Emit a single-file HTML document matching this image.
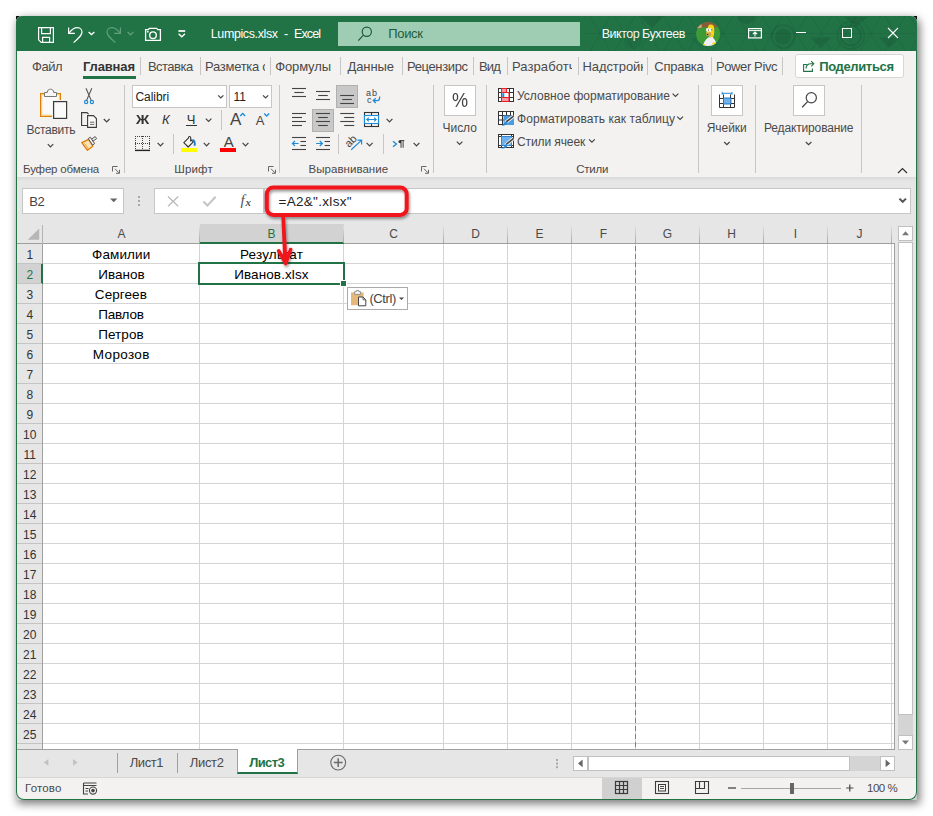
<!DOCTYPE html>
<html lang="ru"><head><meta charset="utf-8"><title>Lumpics.xlsx - Excel</title>
<style>
html,body{margin:0;padding:0;background:#fff}
body{position:relative;width:933px;height:816px;overflow:hidden;font-family:"Liberation Sans",sans-serif}
div,svg.i,span.t{position:absolute;box-sizing:border-box}
span.t{white-space:pre;line-height:1}
svg.i{overflow:visible}
.wb{background:#fff;border:1px solid #c6c6c6}
.sep{width:1px;background:#c8c6c4}

</style></head>
<body>
<div style="left:16px;top:16px;width:6px;height:6px;background:#0c1210"></div>
<div style="left:911px;top:16px;width:6px;height:6px;background:#0c1210"></div>
<div style="left:16px;top:16px;width:901px;height:784px;background:#cdcdcd;border-radius:6px 6px 1px 1px;box-shadow:2px 3px 9px 1px rgba(0,0,0,.5)"></div>
<div style="left:16px;top:16px;width:901px;height:784px;background:#e6e6e6;border-radius:6px 6px 8px 8px"></div>
<div style="left:16px;top:16px;width:901px;height:35px;background:#217346;border-radius:6px 6px 0 0"></div>
<span class="t" style="left:210.75px;top:28px;font-size:12.5px;color:#fff;letter-spacing:-0.389px;">Lumpics.xlsx</span>
<span class="t" style="left:283.90px;top:28px;font-size:12.5px;color:#fff;">-</span>
<span class="t" style="left:294.00px;top:28px;font-size:12.5px;color:#fff;letter-spacing:-0.891px;">Excel</span>
<div style="left:338px;top:22px;width:242px;height:24px;background:#9fcdb3"></div>
<span class="t" style="left:388.23px;top:27px;font-size:13px;color:#1e5c3a;letter-spacing:-0.326px;">Поиск</span>
<span class="t" style="left:601.75px;top:28px;font-size:12.5px;color:#fff;letter-spacing:-0.513px;">Виктор Бухтеев</span>
<div style="left:17px;top:51px;width:899px;height:126px;background:#f3f2f1"></div>
<span class="t" style="left:31.98px;top:60px;font-size:13px;color:#4a4a4a;letter-spacing:-0.455px;">Файл</span>
<span class="t" style="left:147.98px;top:60px;font-size:13px;color:#4a4a4a;letter-spacing:-0.525px;">Вставка</span>
<span class="t" style="left:204.98px;top:60px;font-size:13px;color:#4a4a4a;letter-spacing:-0.265px;width:60.3px;overflow:hidden;">Разметка с</span>
<span class="t" style="left:275.23px;top:60px;font-size:13px;color:#4a4a4a;letter-spacing:-0.133px;">Формулы</span>
<span class="t" style="left:347.48px;top:60px;font-size:13px;color:#4a4a4a;letter-spacing:-0.095px;">Данные</span>
<span class="t" style="left:406.98px;top:60px;font-size:13px;color:#4a4a4a;letter-spacing:-0.372px;">Рецензирс</span>
<span class="t" style="left:478.98px;top:60px;font-size:13px;color:#4a4a4a;letter-spacing:-0.794px;">Вид</span>
<span class="t" style="left:511.98px;top:60px;font-size:13px;color:#4a4a4a;letter-spacing:0.086px;width:60.4px;overflow:hidden;">Разработч</span>
<span class="t" style="left:582.48px;top:60px;font-size:13px;color:#4a4a4a;letter-spacing:-0.075px;width:60.2px;overflow:hidden;">Надстройк</span>
<span class="t" style="left:654.23px;top:60px;font-size:13px;color:#4a4a4a;letter-spacing:-0.229px;">Справка</span>
<span class="t" style="left:715.98px;top:60px;font-size:13px;color:#4a4a4a;letter-spacing:-0.388px;">Power Pivc</span>
<span class="t" style="left:82.98px;top:60px;font-size:13px;color:#333;font-weight:bold;letter-spacing:-0.139px;">Главная</span>
<div style="left:83px;top:76px;width:53px;height:3px;background:#217346"></div>
<div class="sep" style="left:140px;top:57px;width:1px;height:18px;"></div>
<div class="sep" style="left:200px;top:57px;width:1px;height:18px;"></div>
<div class="sep" style="left:270px;top:57px;width:1px;height:18px;"></div>
<div class="sep" style="left:340px;top:57px;width:1px;height:18px;"></div>
<div class="sep" style="left:402px;top:57px;width:1px;height:18px;"></div>
<div class="sep" style="left:473px;top:57px;width:1px;height:18px;"></div>
<div class="sep" style="left:507px;top:57px;width:1px;height:18px;"></div>
<div class="sep" style="left:578px;top:57px;width:1px;height:18px;"></div>
<div class="sep" style="left:647px;top:57px;width:1px;height:18px;"></div>
<div class="sep" style="left:711px;top:57px;width:1px;height:18px;"></div>
<div class="sep" style="left:782px;top:57px;width:1px;height:18px;"></div>
<div style="left:795px;top:54px;width:109px;height:24px;background:#fff;border:1px solid #d8d6d4;border-radius:3px"></div>
<span class="t" style="left:819.18px;top:60px;font-size:13px;color:#217346;font-weight:bold;letter-spacing:-0.358px;">Поделиться</span>
<div class="sep" style="left:124px;top:85px;width:1px;height:88px;"></div>
<div class="sep" style="left:279px;top:85px;width:1px;height:88px;"></div>
<div class="sep" style="left:433px;top:85px;width:1px;height:88px;"></div>
<div class="sep" style="left:486px;top:85px;width:1px;height:88px;"></div>
<div class="sep" style="left:698px;top:85px;width:1px;height:88px;"></div>
<div class="sep" style="left:755px;top:85px;width:1px;height:88px;"></div>
<div class="sep" style="left:861px;top:85px;width:1px;height:88px;"></div>
<span class="t" style="left:23.04px;top:164px;font-size:11.5px;color:#4a4a4a;letter-spacing:-0.173px;">Буфер обмена</span>
<span class="t" style="left:174.29px;top:164px;font-size:11.5px;color:#4a4a4a;letter-spacing:0.146px;">Шрифт</span>
<span class="t" style="left:308.54px;top:164px;font-size:11.5px;color:#4a4a4a;letter-spacing:0.034px;">Выравнивание</span>
<span class="t" style="left:576.29px;top:164px;font-size:11.5px;color:#4a4a4a;letter-spacing:-0.263px;">Стили</span>
<span class="t" style="left:26.52px;top:124px;font-size:12px;color:#4a4a4a;letter-spacing:-0.284px;">Вставить</span>
<div class="wb" style="left:132px;top:85px;width:95px;height:23px;"></div>
<span class="t" style="left:135.52px;top:91px;font-size:12px;color:#222;letter-spacing:-0.059px;">Calibri</span>
<div class="wb" style="left:229px;top:85px;width:43px;height:23px;"></div>
<span class="t" style="left:233.50px;top:91px;font-size:12px;color:#222;">11</span>
<span class="t" style="left:136.00px;top:113px;font-size:13px;color:#333;font-weight:bold;transform:scaleX(1.12);transform-origin:0 0;">Ж</span>
<span class="t" style="left:162.00px;top:113px;font-size:13px;color:#333;font-style:italic;">К</span>
<span class="t" style="left:186.75px;top:113px;font-size:13px;color:#333;">Ч</span>
<div style="left:186px;top:125px;width:11px;height:1px;background:#333"></div>
<div class="sep" style="left:221px;top:110px;width:1px;height:20px;"></div>
<div class="sep" style="left:173px;top:134px;width:1px;height:20px;"></div>
<div class="sep" style="left:338px;top:134px;width:1px;height:20px;"></div>
<div class="sep" style="left:383px;top:134px;width:1px;height:20px;"></div>
<span class="t" style="left:230.00px;top:111px;font-size:17px;color:#444;">A</span>
<span class="t" style="left:255.80px;top:114px;font-size:13px;color:#444;">A</span>
<div style="left:181px;top:148px;width:16px;height:4px;background:#ffff00"></div>
<div style="left:220px;top:148px;width:16px;height:4px;background:#ff0000"></div>
<span class="t" style="left:223.70px;top:134px;font-size:15px;color:#444;">A</span>
<div style="left:336px;top:85px;width:22px;height:23px;background:#c8c8c8;border:1px solid #b0b0b0"></div>
<div style="left:312px;top:109px;width:22px;height:23px;background:#c8c8c8;border:1px solid #b0b0b0"></div>
<div class="wb" style="left:444px;top:85px;width:32px;height:31px;"></div>
<span class="t" style="left:451.60px;top:91px;font-size:19.5px;color:#444;transform:scaleX(.93);transform-origin:0 0;">%</span>
<span class="t" style="left:442.52px;top:122px;font-size:12px;color:#4a4a4a;letter-spacing:-0.033px;">Число</span>
<span class="t" style="left:517.02px;top:90px;font-size:12px;color:#4a4a4a;letter-spacing:0.010px;">Условное форматирование</span>
<span class="t" style="left:517.02px;top:113px;font-size:12px;color:#4a4a4a;letter-spacing:0.078px;">Форматировать как таблицу</span>
<span class="t" style="left:517.02px;top:136px;font-size:12px;color:#4a4a4a;letter-spacing:-0.106px;">Стили ячеек</span>
<div class="wb" style="left:711px;top:85px;width:32px;height:31px;"></div>
<span class="t" style="left:706.72px;top:122px;font-size:12px;color:#4a4a4a;letter-spacing:-0.058px;">Ячейки</span>
<div class="wb" style="left:793px;top:85px;width:32px;height:31px;"></div>
<span class="t" style="left:764.02px;top:122px;font-size:12px;color:#4a4a4a;letter-spacing:-0.152px;">Редактирование</span>
<div style="left:17px;top:177px;width:899px;height:4px;background:linear-gradient(#d9d9d9,#e6e6e6)"></div>
<div class="wb" style="left:22px;top:188px;width:102px;height:26px;"></div>
<span class="t" style="left:29.23px;top:195px;font-size:13px;color:#444;letter-spacing:-0.503px;">B2</span>
<div class="wb" style="left:154px;top:188px;width:110px;height:26px;"></div>
<div class="wb" style="left:264px;top:188px;width:647px;height:26px;"></div>
<span class="t" style="left:278.46px;top:195px;font-size:13.5px;color:#222;letter-spacing:0.311px;">=A2&amp;".xlsx"</span>
<span class="t" style="left:240.50px;top:193px;font-size:15px;color:#555;font-style:italic;font-family:'Liberation Serif',serif;">f</span>
<span class="t" style="left:245.50px;top:197px;font-size:11px;color:#555;font-weight:bold;font-style:italic;font-family:'Liberation Serif',serif;">x</span>
<div style="left:17px;top:224px;width:878px;height:526px;background:#fff"></div>
<div style="left:17px;top:224px;width:878px;height:20px;background:#e6e6e6;border-bottom:1px solid #9f9f9f"></div>
<div style="left:17px;top:244px;width:26px;height:506px;background:#e6e6e6;border-right:1px solid #9f9f9f"></div>
<div style="left:42px;top:225px;width:1px;height:19px;background:#b4b4b4"></div>
<div style="left:200px;top:224px;width:144px;height:20px;background:#d2d2d2;border-bottom:2px solid #217346"></div>
<div style="left:17px;top:264px;width:26px;height:20px;background:#d2d2d2;border-right:2px solid #217346"></div>
<div style="left:43px;top:263px;width:851px;height:1px;background:#d4d4d4"></div>
<div style="left:17px;top:263px;width:25px;height:1px;background:#c4c4c4"></div>
<div style="left:43px;top:283px;width:851px;height:1px;background:#d4d4d4"></div>
<div style="left:17px;top:283px;width:25px;height:1px;background:#c4c4c4"></div>
<div style="left:43px;top:303px;width:851px;height:1px;background:#d4d4d4"></div>
<div style="left:17px;top:303px;width:25px;height:1px;background:#c4c4c4"></div>
<div style="left:43px;top:323px;width:851px;height:1px;background:#d4d4d4"></div>
<div style="left:17px;top:323px;width:25px;height:1px;background:#c4c4c4"></div>
<div style="left:43px;top:343px;width:851px;height:1px;background:#d4d4d4"></div>
<div style="left:17px;top:343px;width:25px;height:1px;background:#c4c4c4"></div>
<div style="left:43px;top:363px;width:851px;height:1px;background:#d4d4d4"></div>
<div style="left:17px;top:363px;width:25px;height:1px;background:#c4c4c4"></div>
<div style="left:43px;top:383px;width:851px;height:1px;background:#d4d4d4"></div>
<div style="left:17px;top:383px;width:25px;height:1px;background:#c4c4c4"></div>
<div style="left:43px;top:403px;width:851px;height:1px;background:#d4d4d4"></div>
<div style="left:17px;top:403px;width:25px;height:1px;background:#c4c4c4"></div>
<div style="left:43px;top:423px;width:851px;height:1px;background:#d4d4d4"></div>
<div style="left:17px;top:423px;width:25px;height:1px;background:#c4c4c4"></div>
<div style="left:43px;top:443px;width:851px;height:1px;background:#d4d4d4"></div>
<div style="left:17px;top:443px;width:25px;height:1px;background:#c4c4c4"></div>
<div style="left:43px;top:463px;width:851px;height:1px;background:#d4d4d4"></div>
<div style="left:17px;top:463px;width:25px;height:1px;background:#c4c4c4"></div>
<div style="left:43px;top:483px;width:851px;height:1px;background:#d4d4d4"></div>
<div style="left:17px;top:483px;width:25px;height:1px;background:#c4c4c4"></div>
<div style="left:43px;top:503px;width:851px;height:1px;background:#d4d4d4"></div>
<div style="left:17px;top:503px;width:25px;height:1px;background:#c4c4c4"></div>
<div style="left:43px;top:523px;width:851px;height:1px;background:#d4d4d4"></div>
<div style="left:17px;top:523px;width:25px;height:1px;background:#c4c4c4"></div>
<div style="left:43px;top:543px;width:851px;height:1px;background:#d4d4d4"></div>
<div style="left:17px;top:543px;width:25px;height:1px;background:#c4c4c4"></div>
<div style="left:43px;top:563px;width:851px;height:1px;background:#d4d4d4"></div>
<div style="left:17px;top:563px;width:25px;height:1px;background:#c4c4c4"></div>
<div style="left:43px;top:583px;width:851px;height:1px;background:#d4d4d4"></div>
<div style="left:17px;top:583px;width:25px;height:1px;background:#c4c4c4"></div>
<div style="left:43px;top:603px;width:851px;height:1px;background:#d4d4d4"></div>
<div style="left:17px;top:603px;width:25px;height:1px;background:#c4c4c4"></div>
<div style="left:43px;top:623px;width:851px;height:1px;background:#d4d4d4"></div>
<div style="left:17px;top:623px;width:25px;height:1px;background:#c4c4c4"></div>
<div style="left:43px;top:643px;width:851px;height:1px;background:#d4d4d4"></div>
<div style="left:17px;top:643px;width:25px;height:1px;background:#c4c4c4"></div>
<div style="left:43px;top:663px;width:851px;height:1px;background:#d4d4d4"></div>
<div style="left:17px;top:663px;width:25px;height:1px;background:#c4c4c4"></div>
<div style="left:43px;top:683px;width:851px;height:1px;background:#d4d4d4"></div>
<div style="left:17px;top:683px;width:25px;height:1px;background:#c4c4c4"></div>
<div style="left:43px;top:703px;width:851px;height:1px;background:#d4d4d4"></div>
<div style="left:17px;top:703px;width:25px;height:1px;background:#c4c4c4"></div>
<div style="left:43px;top:723px;width:851px;height:1px;background:#d4d4d4"></div>
<div style="left:17px;top:723px;width:25px;height:1px;background:#c4c4c4"></div>
<div style="left:43px;top:743px;width:851px;height:1px;background:#d4d4d4"></div>
<div style="left:17px;top:743px;width:25px;height:1px;background:#c4c4c4"></div>
<div style="left:199px;top:244px;width:1px;height:506px;background:#d4d4d4"></div>
<div style="left:199px;top:226px;width:1px;height:17px;background:linear-gradient(#e0e0e0,#a8a8a8)"></div>
<div style="left:343px;top:244px;width:1px;height:506px;background:#d4d4d4"></div>
<div style="left:343px;top:226px;width:1px;height:17px;background:linear-gradient(#e0e0e0,#a8a8a8)"></div>
<div style="left:443px;top:244px;width:1px;height:506px;background:#d4d4d4"></div>
<div style="left:443px;top:226px;width:1px;height:17px;background:linear-gradient(#e0e0e0,#a8a8a8)"></div>
<div style="left:507px;top:244px;width:1px;height:506px;background:#d4d4d4"></div>
<div style="left:507px;top:226px;width:1px;height:17px;background:linear-gradient(#e0e0e0,#a8a8a8)"></div>
<div style="left:571px;top:244px;width:1px;height:506px;background:#d4d4d4"></div>
<div style="left:571px;top:226px;width:1px;height:17px;background:linear-gradient(#e0e0e0,#a8a8a8)"></div>
<div style="left:635px;top:244px;width:1px;height:506px;background:#d4d4d4"></div>
<div style="left:635px;top:226px;width:1px;height:17px;background:linear-gradient(#e0e0e0,#a8a8a8)"></div>
<div style="left:699px;top:244px;width:1px;height:506px;background:#d4d4d4"></div>
<div style="left:699px;top:226px;width:1px;height:17px;background:linear-gradient(#e0e0e0,#a8a8a8)"></div>
<div style="left:763px;top:244px;width:1px;height:506px;background:#d4d4d4"></div>
<div style="left:763px;top:226px;width:1px;height:17px;background:linear-gradient(#e0e0e0,#a8a8a8)"></div>
<div style="left:827px;top:244px;width:1px;height:506px;background:#d4d4d4"></div>
<div style="left:827px;top:226px;width:1px;height:17px;background:linear-gradient(#e0e0e0,#a8a8a8)"></div>
<div style="left:891px;top:244px;width:1px;height:506px;background:#d4d4d4"></div>
<div style="left:891px;top:226px;width:1px;height:17px;background:linear-gradient(#e0e0e0,#a8a8a8)"></div>
<div style="left:894px;top:243px;width:1px;height:507px;background:#9f9f9f"></div>
<div style="left:17px;top:749px;width:878px;height:1px;background:#9f9f9f"></div>
<span class="t" style="left:117.49px;top:228px;font-size:12px;color:#4a4a4a;">A</span>
<span class="t" style="left:267.49px;top:228px;font-size:12px;color:#217346;">B</span>
<span class="t" style="left:389.16px;top:228px;font-size:12px;color:#4a4a4a;">C</span>
<span class="t" style="left:471.16px;top:228px;font-size:12px;color:#4a4a4a;">D</span>
<span class="t" style="left:535.49px;top:228px;font-size:12px;color:#4a4a4a;">E</span>
<span class="t" style="left:599.83px;top:228px;font-size:12px;color:#4a4a4a;">F</span>
<span class="t" style="left:662.83px;top:228px;font-size:12px;color:#4a4a4a;">G</span>
<span class="t" style="left:727.16px;top:228px;font-size:12px;color:#4a4a4a;">H</span>
<span class="t" style="left:793.83px;top:228px;font-size:12px;color:#4a4a4a;">I</span>
<span class="t" style="left:856.50px;top:228px;font-size:12px;color:#4a4a4a;">J</span>
<span class="t" style="left:26.46px;top:249px;font-size:12px;color:#333;">1</span>
<span class="t" style="left:26.46px;top:269px;font-size:12px;color:#217346;">2</span>
<span class="t" style="left:26.46px;top:289px;font-size:12px;color:#333;">3</span>
<span class="t" style="left:26.46px;top:309px;font-size:12px;color:#333;">4</span>
<span class="t" style="left:26.46px;top:329px;font-size:12px;color:#333;">5</span>
<span class="t" style="left:26.46px;top:349px;font-size:12px;color:#333;">6</span>
<span class="t" style="left:26.46px;top:369px;font-size:12px;color:#333;">7</span>
<span class="t" style="left:26.46px;top:389px;font-size:12px;color:#333;">8</span>
<span class="t" style="left:26.46px;top:409px;font-size:12px;color:#333;">9</span>
<span class="t" style="left:23.12px;top:429px;font-size:12px;color:#333;">10</span>
<span class="t" style="left:23.57px;top:449px;font-size:12px;color:#333;">11</span>
<span class="t" style="left:23.12px;top:469px;font-size:12px;color:#333;">12</span>
<span class="t" style="left:23.12px;top:489px;font-size:12px;color:#333;">13</span>
<span class="t" style="left:23.12px;top:509px;font-size:12px;color:#333;">14</span>
<span class="t" style="left:23.12px;top:529px;font-size:12px;color:#333;">15</span>
<span class="t" style="left:23.12px;top:549px;font-size:12px;color:#333;">16</span>
<span class="t" style="left:23.12px;top:569px;font-size:12px;color:#333;">17</span>
<span class="t" style="left:23.12px;top:589px;font-size:12px;color:#333;">18</span>
<span class="t" style="left:23.12px;top:609px;font-size:12px;color:#333;">19</span>
<span class="t" style="left:23.12px;top:629px;font-size:12px;color:#333;">20</span>
<span class="t" style="left:23.12px;top:649px;font-size:12px;color:#333;">21</span>
<span class="t" style="left:23.12px;top:669px;font-size:12px;color:#333;">22</span>
<span class="t" style="left:23.12px;top:689px;font-size:12px;color:#333;">23</span>
<span class="t" style="left:23.12px;top:709px;font-size:12px;color:#333;">24</span>
<span class="t" style="left:23.12px;top:729px;font-size:12px;color:#333;">25</span>
<span class="t" style="left:92.06px;top:248px;font-size:13.5px;color:#000;letter-spacing:0.116px;">Фамилии</span>
<span class="t" style="left:98.16px;top:268px;font-size:13.5px;color:#000;letter-spacing:0.050px;">Иванов</span>
<span class="t" style="left:94.86px;top:288px;font-size:13.5px;color:#000;letter-spacing:0.069px;">Сергеев</span>
<span class="t" style="left:98.16px;top:308px;font-size:13.5px;color:#000;letter-spacing:-0.204px;">Павлов</span>
<span class="t" style="left:98.16px;top:328px;font-size:13.5px;color:#000;letter-spacing:0.072px;">Петров</span>
<span class="t" style="left:92.86px;top:348px;font-size:13.5px;color:#000;letter-spacing:0.325px;">Морозов</span>
<span class="t" style="left:239.96px;top:248px;font-size:13.5px;color:#000;letter-spacing:0.197px;">Результат</span>
<span class="t" style="left:234.21px;top:268px;font-size:13.5px;color:#000;letter-spacing:0.095px;">Иванов.xlsx</span>
<div style="left:198px;top:262px;width:147px;height:23px;border:2px solid #217346"></div>
<div style="left:340px;top:280px;width:7px;height:7px;background:#217346;border:1px solid #fff"></div>
<div style="left:635px;top:246px;width:1px;height:502px;background:repeating-linear-gradient(#808080 0 5px,transparent 5px 8px)"></div>
<div style="left:347px;top:287px;width:61px;height:23px;background:#fff;border:1px solid #ababab"></div>
<span class="t" style="left:369.48px;top:292px;font-size:13px;color:#444;letter-spacing:-0.423px;">(Ctrl)</span>
<div style="left:898px;top:226px;width:15px;height:15px;background:#fff;border:1px solid #c0c0c0"></div>
<div style="left:898px;top:242px;width:15px;height:473px;background:#fff;border:1px solid #c0c0c0"></div>
<div style="left:898px;top:715px;width:15px;height:20px;background:#d4d4d4"></div>
<div style="left:898px;top:735px;width:15px;height:15px;background:#fff;border:1px solid #c0c0c0"></div>
<div style="left:237px;top:749px;width:61px;height:25px;background:#fff;border-left:1px solid #9f9f9f;border-right:1px solid #9f9f9f;border-bottom:2px solid #217346"></div>
<span class="t" style="left:129.73px;top:756px;font-size:13px;color:#4a4a4a;letter-spacing:-0.417px;">Лист1</span>
<span class="t" style="left:189.73px;top:756px;font-size:13px;color:#4a4a4a;letter-spacing:-0.317px;">Лист2</span>
<span class="t" style="left:249.23px;top:756px;font-size:13px;color:#217346;font-weight:bold;letter-spacing:-0.611px;">Лист3</span>
<div style="left:117px;top:753px;width:1px;height:20px;background:#9f9f9f"></div>
<div style="left:177px;top:753px;width:1px;height:20px;background:#9f9f9f"></div>
<div style="left:573px;top:756px;width:15px;height:15px;background:#fff;border:1px solid #c0c0c0"></div>
<div style="left:588px;top:756px;width:262px;height:15px;background:#fff;border:1px solid #c0c0c0"></div>
<div style="left:850px;top:756px;width:30px;height:15px;background:#d4d4d4"></div>
<div style="left:880px;top:756px;width:15px;height:15px;background:#fff;border:1px solid #c0c0c0"></div>
<div style="left:17px;top:777px;width:899px;height:22px;background:#f3f2f1;border-top:1px solid #d6d6d6;border-radius:0 0 7px 7px"></div>
<span class="t" style="left:25.04px;top:783px;font-size:11.5px;color:#4a4a4a;letter-spacing:0.177px;">Готово</span>
<div style="left:602px;top:778px;width:40px;height:21px;background:#d0d0d0"></div>
<div style="left:741px;top:788px;width:100px;height:1px;background:#a6a6a6"></div>
<div style="left:790px;top:783px;width:4px;height:11px;background:#666"></div>
<span class="t" style="left:867.04px;top:783px;font-size:11.5px;color:#4a4a4a;letter-spacing:-0.507px;">100 %</span>
<div style="left:16px;top:51px;width:901px;height:749px;border:1px solid #217346;border-top:none;border-radius:0 0 8px 8px;pointer-events:none"></div>
<svg class="i" style="left:0;top:0" width="933" height="816" viewBox="0 0 933 816" fill="none" ><clipPath id="tb"><rect x="585" y="16" width="331" height="35"/></clipPath><g clip-path="url(#tb)"><path d="M540.8 16 L561 51 M561 16 L540.8 51" stroke="rgba(0,0,0,.07)" stroke-width="1"/><path d="M565.4 16 L585.6 51 M585.6 16 L565.4 51" stroke="rgba(0,0,0,.07)" stroke-width="1"/><path d="M590 16 L610.2 51 M610.2 16 L590 51" stroke="rgba(0,0,0,.07)" stroke-width="1"/><path d="M614.6 16 L634.8 51 M634.8 16 L614.6 51" stroke="rgba(0,0,0,.07)" stroke-width="1"/><path d="M639.2 16 L659.4 51 M659.4 16 L639.2 51" stroke="rgba(0,0,0,.07)" stroke-width="1"/><path d="M663.8 16 L684 51 M684 16 L663.8 51" stroke="rgba(0,0,0,.07)" stroke-width="1"/><path d="M688.4 16 L708.6 51 M708.6 16 L688.4 51" stroke="rgba(0,0,0,.07)" stroke-width="1"/><path d="M713 16 L733.2 51 M733.2 16 L713 51" stroke="rgba(0,0,0,.07)" stroke-width="1"/><path d="M737.6 16 L757.8 51 M757.8 16 L737.6 51" stroke="rgba(0,0,0,.07)" stroke-width="1"/><path d="M762.2 16 L782.4 51 M782.4 16 L762.2 51" stroke="rgba(0,0,0,.07)" stroke-width="1"/><path d="M786.8 16 L807 51 M807 16 L786.8 51" stroke="rgba(0,0,0,.07)" stroke-width="1"/><path d="M811.4 16 L831.6 51 M831.6 16 L811.4 51" stroke="rgba(0,0,0,.07)" stroke-width="1"/><path d="M836 16 L856.2 51 M856.2 16 L836 51" stroke="rgba(0,0,0,.07)" stroke-width="1"/><path d="M860.6 16 L880.8 51 M880.8 16 L860.6 51" stroke="rgba(0,0,0,.07)" stroke-width="1"/><path d="M885.2 16 L905.4 51 M905.4 16 L885.2 51" stroke="rgba(0,0,0,.07)" stroke-width="1"/><path d="M909.8 16 L930 51 M930 16 L909.8 51" stroke="rgba(0,0,0,.07)" stroke-width="1"/><path d="M934.4 16 L954.6 51 M954.6 16 L934.4 51" stroke="rgba(0,0,0,.07)" stroke-width="1"/><path d="M959 16 L979.2 51 M979.2 16 L959 51" stroke="rgba(0,0,0,.07)" stroke-width="1"/><path d="M585 33.5 H916" stroke="rgba(0,0,0,.07)" stroke-width="1"/><circle cx="783.2" cy="36.5" r="8" fill="rgba(0,0,0,.09)"/><circle cx="783.2" cy="36.5" r="11.5" stroke="rgba(0,0,0,.09)" stroke-width="1.6" fill="none"/><circle cx="746.8" cy="15" r="9" fill="rgba(0,0,0,.09)"/><circle cx="850.8" cy="35.4" r="10" stroke="rgba(0,0,0,.09)" stroke-width="2" fill="none"/><circle cx="850.8" cy="35.4" r="13.5" stroke="rgba(0,0,0,.09)" stroke-width="1.4" fill="none"/><path d="M844.3 17 H867.9 L856 27 Z" fill="rgba(0,0,0,.09)"/><path d="M810 37.6 H831.5 L820.7 48.3 Z" fill="rgba(0,0,0,.09)"/><path d="M878.6 37.6 H900 L889.4 48.3 Z" fill="rgba(0,0,0,.09)"/><path d="M640 16 H664 L652 28 Z" fill="rgba(0,0,0,.09)"/><path d="M690 38 H714 L702 50 Z" fill="rgba(0,0,0,.05)"/><circle cx="633" cy="40" r="9" fill="rgba(0,0,0,.05)"/></g></svg>
<svg class="i" style="left:0;top:0" width="933" height="816" viewBox="0 0 933 816" fill="none" ><g stroke="#fff" stroke-width="1.2" fill="none"><path d="M38.6 27.6 H53.4 V42.4 H41.2 L38.6 39.8 Z"/><path d="M41.6 27.6 V33.6 H50.4 V27.6"/><path d="M42.6 42.4 V37.4 H49.6 V42.4"/><path d="M68.6 27.4 V33.4 H74.8"/><path d="M68.9 33.1 C71.5 29.5 74.5 27.6 77.5 27.6 C80.5 27.6 82 30 82 32.3 C82 35 80 37 73.6 42.6"/><path d="M88.6 32 L91.5 34.6 L94.4 32" stroke="#fff" stroke-width="1.3"/><path d="M145.6 29.6 H148.3 L149.3 28.4 H156.7 L157.7 29.6 H160.4 V40.4 H145.6 Z" stroke-width="1.3"/><circle cx="153" cy="35.2" r="3.3" stroke-width="1.4"/><rect x="146.9" y="30.9" width="1.7" height="1.6" fill="#fff" stroke="none"/><path d="M178.4 31 H185.2" stroke-width="1.7"/><path d="M178.6 33.8 L181.8 36.8 L185 33.8" stroke="#fff" stroke-width="1.3"/><rect x="748.6" y="28.6" width="12.8" height="9.3"/><path d="M748.6 30.6 H761.4" stroke-width="1"/><path d="M755 36.5 V32.2 M752.8 34.2 L755 32 L757.2 34.2" stroke-width="1.1"/><path d="M796 32.5 H806" stroke-width="1"/><rect x="842.5" y="28.5" width="9" height="9" stroke-width="1"/><path d="M888 28 L898 38 M898 28 L888 38" stroke-width="1.1"/></g><g stroke="#5f9f7e" stroke-width="1.2" fill="none"><path d="M120.4 27.4 V33.4 H114.2"/><path d="M120.1 33.1 C117.5 29.5 114.5 27.6 111.5 27.6 C108.5 27.6 107 30 107 32.3 C107 35 109 37 115.4 42.6"/><path d="M127.6 32 L130.5 34.8 L133.4 32" stroke="#5f9f7e" stroke-width="1.2"/></g><g stroke="#1e5c3a" stroke-width="1.2"><circle cx="366.8" cy="31.7" r="4.6"/><path d="M363.4 35.1 L358.3 40.6"/></g></svg>
<svg class="i" style="left:0;top:0" width="933" height="816" viewBox="0 0 933 816" fill="none" ><clipPath id="av"><circle cx="708.1" cy="34.1" r="12"/></clipPath><g clip-path="url(#av)"><rect x="696" y="22" width="25" height="25" fill="#3d9a36"/><path d="M696 29 C700 27.5 704 27.2 708 27.4 L716 27.2 L721 28 V21 H696 Z" fill="#8a5a3a"/><path d="M696 29 C698 28.2 700 27.8 702 27.6 L701 23 H696 Z" fill="#d6a680"/><path d="M708 27 C708 25 709.6 24.6 711 24.6 C713 24.6 714.2 26 714.2 28.5 V33 C714.2 35 713.4 36 713 37.4 L709.5 37.6 L709 35.6 H706.4 V32 L707.6 31 Z" fill="#f7d31f"/><ellipse cx="707.6" cy="29.9" rx="1.6" ry="1.8" fill="#fff"/><ellipse cx="710.4" cy="30" rx="1.5" ry="1.7" fill="#fff"/><rect x="708" y="29.6" width="1" height="1" fill="#222"/><rect x="711.2" y="29.4" width="1" height="1" fill="#222"/><path d="M706.2 32.4 H710.6 C711.4 33.4 711.4 35 710.6 36 H707.2 C706.4 35 706 33.6 706.2 32.4 Z" fill="#c9a356"/><rect x="706.8" y="34" width="1.4" height="1" fill="#222"/><path d="M703 46.5 C703.6 42 705.6 39.6 708 37.4 L712.6 37 C714 39 715.6 40.6 716.2 43 L713.6 46.5 Z" fill="#f0eff2"/><path d="M712 43.2 L715.6 41.8 L715.8 44 L712.8 45.2 Z" fill="#f7d31f"/><rect x="703.2" y="44" width="1.8" height="1.4" fill="#f7d31f"/></g></svg>
<svg class="i" style="left:0;top:0" width="933" height="816" viewBox="0 0 933 816" fill="none" ><g stroke="#217346" stroke-width="1.1"><path d="M807 64.5 H803.6 V71.4 H812.4 V68.5"/><path d="M806 68.5 C806 65.5 808 63.8 811 63.8 H813.6 M811.2 61.2 L813.8 63.8 L811.2 66.4"/></g></svg>
<svg class="i" style="left:0;top:0" width="933" height="816" viewBox="0 0 933 816" fill="none" ><rect x="40.5" y="93.5" width="20" height="23" fill="#fafafa" stroke="#e07a00"/><rect x="41.6" y="94.6" width="17.8" height="20.8" stroke="#f9cf80" stroke-width="1.3"/><path d="M44.5 96.5 V92.5 H47.3 C47.3 90.2 48.8 89.2 50.5 89.2 C52.2 89.2 53.7 90.2 53.7 92.5 H56.5 V96.5 Z" fill="#f8f8f8" stroke="#777"/><rect x="52" y="100" width="16" height="20" fill="#f3f2f1"/><rect x="53.6" y="101.6" width="13" height="16.8" fill="#fafafa" stroke="#3b3b3b" stroke-width="1.2"/><path d="M47.8 144.2 L50.5 146.9 L53.2 144.2" stroke="#444" stroke-width="1.2"/><path d="M86 88.3 L91.2 100.4 M91.8 88.3 L86.6 100.4" stroke="#555" stroke-width="1.1"/><circle cx="86.1" cy="102" r="1.6" stroke="#1e8bd8" stroke-width="1.2"/><circle cx="91.9" cy="102" r="1.6" stroke="#1e8bd8" stroke-width="1.2"/><path d="M87.5 125.5 H81.6 V112.6 H87 L88.6 114.2" stroke="#3b3b3b" stroke-width="1.1"/><path d="M87.6 115.6 H93.4 L96.4 118.6 V127.4 H87.6 Z" fill="#fafafa" stroke="#3b3b3b" stroke-width="1.1"/><path d="M90 122.2 H94.3 M90 124.4 H94.3" stroke="#555" stroke-width=".9"/><path d="M103.8 119 L106.7 121.9 L109.6 119" stroke="#444" stroke-width="1.2"/><path d="M81.8 142.6 L88.6 139.4 L92.8 146.2 L87.4 150.4 Z" fill="#fbe3b8" stroke="#e07a00" stroke-width="1.2" stroke-linejoin="round"/><path d="M84.5 143.5 L88.5 149" stroke="#f0a030" stroke-width="1"/><path d="M88.2 138.6 L90.3 137.2 L94.6 143.6 L92.6 145 Z" fill="#f3f2f1" stroke="#555" stroke-width="1"/><path d="M91.4 139.2 L95.2 136.6 L96.6 138.6 L92.8 141.2" stroke="#555" stroke-width="1"/><path d="M112.5 171.5 V166.5 H117.5" stroke="#666" stroke-width="1"/><path d="M115.0 168.8 L119.1 172.9 M119.5 169.8 V173.3 H116.0" stroke="#666" stroke-width="1"/><path d="M268.5 171.5 V166.5 H273.5" stroke="#666" stroke-width="1"/><path d="M271.0 168.8 L275.1 172.9 M275.5 169.8 V173.3 H272.0" stroke="#666" stroke-width="1"/><path d="M421.5 171.5 V166.5 H426.5" stroke="#666" stroke-width="1"/><path d="M424.0 168.8 L428.1 172.9 M428.5 169.8 V173.3 H425.0" stroke="#666" stroke-width="1"/></svg>
<svg class="i" style="left:0;top:0" width="933" height="816" viewBox="0 0 933 816" fill="none" ><path d="M218.2 95.3 L220.8 97.9 L223.4 95.3" stroke="#444" stroke-width="1.2"/><path d="M263 95.3 L265.6 97.9 L268.2 95.3" stroke="#444" stroke-width="1.2"/><path d="M205.8 118.6 L208.6 121.5 L211.4 118.6" stroke="#444" stroke-width="1.2"/><path d="M240.2 116 L242.7 113.5 L245.2 116" stroke="#1e8bd8" stroke-width="1.3"/><path d="M264.2 113.5 L266.7 116 L269.2 113.5" stroke="#1e8bd8" stroke-width="1.3"/><g stroke="#444" stroke-width="1" stroke-dasharray="1 1"><path d="M135 136.5 H150"/><path d="M135.5 136 V150"/><path d="M149.5 136 V150"/><path d="M142.5 136 V150"/><path d="M135 143.5 H150"/></g><path d="M135 150.4 H150" stroke="#222" stroke-width="1.4"/><path d="M157.6 142.8 L160.5 145.8 L163.4 142.8" stroke="#444" stroke-width="1.2"/><path d="M190.7 139.3 L193.3 141.9 L188.2 147 L183.8 142.7 L188.4 138.1 C188.4 136 190.7 135.8 190.7 138 V141.6" stroke="#333" stroke-width="1.1" stroke-linejoin="round"/><path d="M192.4 139.9 C194.4 140.4 195.4 142.6 194.5 145.8" stroke="#1e78c8" stroke-width="1.8"/><path d="M203.8 142.8 L206.6 145.8 L209.4 142.8" stroke="#444" stroke-width="1.2"/><path d="M242.6 142.8 L245.5 145.8 L248.4 142.8" stroke="#444" stroke-width="1.2"/></svg>
<svg class="i" style="left:0;top:0" width="933" height="816" viewBox="0 0 933 816" fill="none" ><path d="M292 88.5 H306" stroke="#444" stroke-width="1.1"/><path d="M294.3 92.5 H303.7" stroke="#444" stroke-width="1.1"/><path d="M292 96.5 H306" stroke="#444" stroke-width="1.1"/><path d="M316 91.5 H330" stroke="#444" stroke-width="1.1"/><path d="M318.2 95.5 H327.8" stroke="#444" stroke-width="1.1"/><path d="M316 99.5 H330" stroke="#444" stroke-width="1.1"/><path d="M340.2 95.5 H354" stroke="#444" stroke-width="1.1"/><path d="M342.3 99.5 H351.9" stroke="#444" stroke-width="1.1"/><path d="M340.2 103.5 H354" stroke="#444" stroke-width="1.1"/><path d="M292 113.5 H306" stroke="#444" stroke-width="1.1"/><path d="M292 117.5 H302" stroke="#444" stroke-width="1.1"/><path d="M292 121.5 H306" stroke="#444" stroke-width="1.1"/><path d="M292 125.5 H302" stroke="#444" stroke-width="1.1"/><path d="M316 113.5 H330" stroke="#444" stroke-width="1.1"/><path d="M318.2 117.5 H327.8" stroke="#444" stroke-width="1.1"/><path d="M316 121.5 H330" stroke="#444" stroke-width="1.1"/><path d="M318.2 125.5 H327.8" stroke="#444" stroke-width="1.1"/><path d="M340.2 113.5 H354.2" stroke="#444" stroke-width="1.1"/><path d="M344.2 117.5 H354.2" stroke="#444" stroke-width="1.1"/><path d="M340.2 121.5 H354.2" stroke="#444" stroke-width="1.1"/><path d="M344.2 125.5 H354.2" stroke="#444" stroke-width="1.1"/><path d="M292 137.5 H306" stroke="#444" stroke-width="1.1"/><path d="M300.4 141.5 H306" stroke="#444" stroke-width="1.1"/><path d="M300.4 145.5 H306" stroke="#444" stroke-width="1.1"/><path d="M292 149.5 H306" stroke="#444" stroke-width="1.1"/><path d="M316 137.5 H330" stroke="#444" stroke-width="1.1"/><path d="M324.6 141.5 H330" stroke="#444" stroke-width="1.1"/><path d="M324.6 145.5 H330" stroke="#444" stroke-width="1.1"/><path d="M316 149.5 H330" stroke="#444" stroke-width="1.1"/><path d="M298.6 143.5 H292.6 M295 141 L292.4 143.5 L295 146" stroke="#1e8bd8" stroke-width="1.2"/><path d="M316.2 143.5 H322.2 M319.8 141 L322.4 143.5 L319.8 146" stroke="#1e8bd8" stroke-width="1.2"/><path d="M379.6 96.6 V98 C379.6 100 378.4 100.6 377 100.6 H373.6 M375.8 98.2 L373.2 100.6 L375.8 103" stroke="#1e8bd8" stroke-width="1.2"/><rect x="364.5" y="112.5" width="14" height="14" stroke="#333" stroke-width="1.1"/><path d="M371.5 112.5 V115.5 M371.5 123.5 V126.5" stroke="#333" stroke-width="1.1"/><rect x="364.5" y="115.5" width="14" height="8" stroke="#1e8bd8" stroke-width="1.1" fill="#fff"/><path d="M367 119.5 H376 M368.8 117.6 L366.8 119.5 L368.8 121.4 M374.2 117.6 L376.2 119.5 L374.2 121.4" stroke="#1e8bd8" stroke-width="1.1"/><path d="M386.6 118.8 L389.5 121.8 L392.4 118.8" stroke="#444" stroke-width="1.2"/><path d="M351.2 149.8 L361.4 140.4 M357.4 140.2 H361.6 V144.4" stroke="#1e8bd8" stroke-width="1.2"/><path d="M366.6 142.8 L369.6 145.8 L372.6 142.8" stroke="#444" stroke-width="1.2"/><path d="M393 141.2 L396.4 144 L393 146.8" stroke="#1e8bd8" stroke-width="1.4"/><path d="M413.6 142.8 L416.5 145.8 L419.4 142.8" stroke="#444" stroke-width="1.2"/></svg>
<svg class="i" style="left:0;top:0" width="933" height="816" viewBox="0 0 933 816" fill="none" ><path d="M456.8 141.6 L459.6 144.4 L462.4 141.6" stroke="#444" stroke-width="1.2"/><rect x="498.5" y="88.5" width="15" height="13" stroke="#333" fill="#fff"/><path d="M501.5 88.5 V101.5 M505.5 88.5 V101.5 M509.5 88.5 V101.5 M498.5 92.5 H513.5 M498.5 97.5 H513.5" stroke="#333"/><rect x="501.5" y="88.5" width="5" height="4" fill="#f59aa4" stroke="#e8202a"/><rect x="501.5" y="92.5" width="7.5" height="5" fill="#fff" stroke="#e8202a"/><rect x="502.3" y="93.2" width="2" height="3.8" fill="#1e8bd8"/><rect x="501.5" y="97.5" width="7.5" height="4" fill="#f59aa4" stroke="#e8202a"/><rect x="498.5" y="111.5" width="15" height="13" stroke="#333" fill="#fff"/><path d="M502.5 111.5 V124.5 M506.5 111.5 V124.5 M510.5 111.5 V124.5 M498.5 115.5 H513.5 M498.5 120 H513.5" stroke="#333"/><rect x="503.5" y="115.5" width="10.5" height="9.5" fill="#4a9be0"/><path d="M513.6 116.2 L505.4 122.6" stroke="#f3f2f1" stroke-width="3.4"/><path d="M513.6 116.2 L506 122" stroke="#444" stroke-width="1.6"/><path d="M506.4 121.4 C504.6 122.2 504.6 124.6 501.6 125.4 C504.4 126.2 507.2 125 507.6 122.6 Z" fill="#2f86d6"/><rect x="498.5" y="134.5" width="15" height="13" stroke="#333" fill="#fff"/><path d="M501.5 134.5 V147.5 M511.5 134.5 V147.5 M498.5 136.5 H513.5 M498.5 145.5 H513.5" stroke="#333"/><rect x="501.5" y="136.5" width="10" height="9" fill="#6fb1ea" stroke="#2f86d6"/><path d="M513.6 138.4 L505.4 145.2" stroke="#f3f2f1" stroke-width="3.4"/><path d="M513.6 138.4 L506 144.6" stroke="#444" stroke-width="1.6"/><path d="M506.4 144 C504.6 144.8 504.6 147.2 501.4 148.2 C504.4 149 507.2 147.6 507.6 145.2 Z" fill="#2f86d6"/><path d="M672.6 93.6 L675.5 96.4 L678.4 93.6" stroke="#444" stroke-width="1.2"/><path d="M677.2 116.6 L680.1 119.4 L683 116.6" stroke="#444" stroke-width="1.2"/><path d="M589 139.4 L591.9 142.2 L594.8 139.4" stroke="#444" stroke-width="1.2"/><path d="M719.5 94.5 V107.5 H734.5 V94.5 M723.5 94.5 V107.5 M730.5 94.5 V107.5 M719.5 98.5 H734.5 M719.5 103.5 H734.5" stroke="#333"/><rect x="723.5" y="98" width="7.4" height="6" fill="#6fb1ea" stroke="#1e78c8"/><path d="M722.2 93.3 H732 M722.2 91.8 V94.8 M732 91.8 V94.8" stroke="#1e8bd8" stroke-width="1"/><path d="M724.2 142 L726.9 144.7 L729.6 142" stroke="#444" stroke-width="1.2"/><circle cx="811.3" cy="97.8" r="5.1" stroke="#444" stroke-width="1.2"/><path d="M807.6 101.6 L802.2 107.2" stroke="#444" stroke-width="1.3"/><path d="M805.8 142 L808.6 144.7 L811.4 142" stroke="#444" stroke-width="1.2"/><path d="M898 173 L902.5 168.6 L907 173" stroke="#333" stroke-width="1.3"/></svg>
<svg class="i" style="left:0;top:0" width="933" height="816" viewBox="0 0 933 816" fill="none" ><path d="M110 198.5 H117.4 L113.7 202.2 Z" fill="#666"/><g fill="#a8a8a8"><rect x="138" y="196" width="2" height="2"/><rect x="138" y="200" width="2" height="2"/><rect x="138" y="204" width="2" height="2"/></g><path d="M168 196.4 L178.2 206.2 M178.2 196.4 L168 206.2" stroke="#bcbcbc" stroke-width="1.4"/><path d="M203.4 201.6 L207.4 205.6 L215.6 196.8" stroke="#c4c4c4" stroke-width="2.1"/><path d="M899.4 198.6 L902.7 201.8 L906 198.6" stroke="#555" stroke-width="2"/></svg>
<svg class="i" style="left:0;top:0" width="933" height="816" viewBox="0 0 933 816" fill="none" ><path d="M39.2 228.6 V239.8 H27.8 Z" fill="#b6b6b6"/><path d="M902 235.2 H909 L905.5 231.2 Z" fill="#777"/><path d="M902 740.4 H909 L905.5 744.4 Z" fill="#777"/><path d="M582.6 759.6 V767.2 L578 763.4 Z" fill="#666"/><path d="M885.6 759.6 V767.2 L890.2 763.4 Z" fill="#666"/><path d="M48.4 759 V765.8 L43.8 762.4 Z" fill="#c2c2c2"/><path d="M73 759 V765.8 L77.6 762.4 Z" fill="#c2c2c2"/><circle cx="338.2" cy="762.6" r="7.4" stroke="#6a6a6a" stroke-width="1.1"/><path d="M333.8 762.6 H342.6 M338.2 758.2 V767" stroke="#6a6a6a" stroke-width="1.5"/><g fill="#a8a8a8"><rect x="556" y="759" width="2" height="2"/><rect x="556" y="762.6" width="2" height="2"/><rect x="556" y="766.2" width="2" height="2"/></g><rect x="351" y="292.4" width="12.6" height="12.8" fill="#e3b878"/><path d="M354.6 294.4 V291.6 H356.4 V290.4 H358.8 V291.6 H360.6 V294.4 Z" fill="#f4f4f4" stroke="#8a8a8a" stroke-width=".9"/><path d="M358.5 297 H363 L365.8 299.8 V305.8 H358.5 Z" fill="#fff" stroke="#444" stroke-width="1"/><path d="M363 297 V299.8 H365.8" stroke="#444" stroke-width=".8"/><path d="M399 297.4 H404 L401.5 299.9 Z" fill="#444"/></svg>
<svg class="i" style="left:0;top:0" width="933" height="816" viewBox="0 0 933 816" fill="none" ><path d="M83.5 783 H96.5 M83.5 783 V794 H88" stroke="#444" stroke-width="1.1"/><path d="M83.5 785.5 H96.5" stroke="#444" stroke-width="1"/><path d="M85.5 788.5 H88.5 M85.5 791 H88" stroke="#444" stroke-width="1"/><circle cx="93" cy="790.6" r="3.6" stroke="#444" stroke-width="1.1" fill="#f3f2f1"/><circle cx="93" cy="790.6" r="1.8" fill="#444"/><rect x="615.5" y="781.5" width="12" height="12" stroke="#3b3b3b" stroke-width="1.2"/><path d="M619.5 781.5 V793.5 M623.5 781.5 V793.5 M615.5 785.5 H627.5 M615.5 789.5 H627.5" stroke="#3b3b3b" stroke-width="1.2"/><rect x="655.5" y="781.5" width="13" height="12" stroke="#3b3b3b" stroke-width="1.1"/><rect x="658.5" y="784.5" width="7" height="6.5" stroke="#3b3b3b" stroke-width="1"/><path d="M660 786.5 H664 M660 788.5 H664" stroke="#3b3b3b" stroke-width=".9"/><path d="M695.5 781.5 H708.5 V793.5 H695.5 Z M699.5 781.5 V788.5 H704.5 V781.5 M695.5 788.5 H699.5" stroke="#3b3b3b" stroke-width="1.1"/><path d="M728 788 H736" stroke="#444" stroke-width="1.3"/><path d="M846.2 788 H853.4 M849.8 784.4 V791.6" stroke="#444" stroke-width="1.2"/></svg>
<svg class="i" style="left:0;top:0" width="933" height="816" viewBox="0 0 933 816" fill="none" ><defs><filter id="sh" x="-10%" y="-10%" width="125%" height="130%"><feGaussianBlur in="SourceAlpha" stdDeviation="1.8"/><feOffset dx="1.2" dy="1.6"/><feComponentTransfer><feFuncA type="linear" slope=".42"/></feComponentTransfer><feMerge><feMergeNode/><feMergeNode in="SourceGraphic"/></feMerge></filter></defs><g filter="url(#sh)"><rect x="266.8" y="187.5" width="139.9" height="27.4" rx="6.5" stroke="#f0181e" stroke-width="4"/><path d="M281.2 214 H284.9 L287.3 260 H283.3 Z" fill="#f0181e"/><path d="M278.7 250.8 L285.8 263.5 L290.6 249.5" stroke="#f0181e" stroke-width="3.6" stroke-linecap="round" stroke-linejoin="round"/><path d="M281.5 254 L285.8 262 L288.8 253.4 Z" fill="#f0181e"/></g></svg>
<span class="t" style="left:366.04px;top:89px;font-size:9px;color:#444;letter-spacing:1.017px;">ab</span>
<span class="t" style="left:367.00px;top:96px;font-size:9px;color:#444;">c</span>
<span class="t" style="left:348.50px;top:138.5px;font-size:11px;color:#444;transform:rotate(-45deg);transform-origin:0 9px;">ab</span>
<span class="t" style="left:398.00px;top:139px;font-size:9px;color:#333;font-weight:bold;transform:scaleX(1.35);transform-origin:0 0;">¶</span>
</body></html>
